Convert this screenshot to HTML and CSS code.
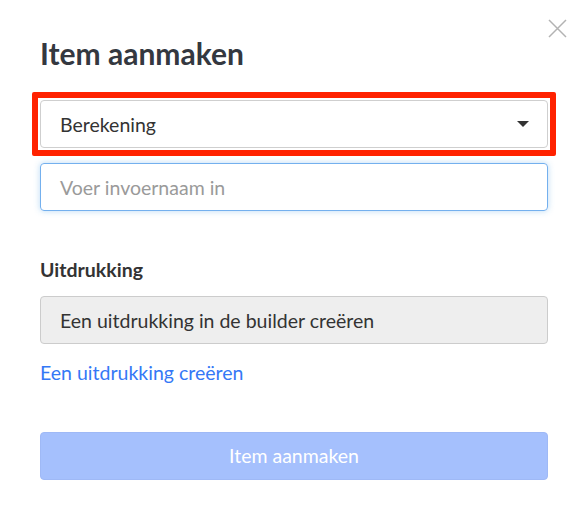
FILE: index.html
```html
<!DOCTYPE html>
<html lang="nl">
<head>
<meta charset="utf-8">
<title>Item aanmaken</title>
<link rel="stylesheet" href="styles.css">
</head>
<body>
<div class="modal">
  <button class="close" aria-label="Sluiten">
    <svg width="19" height="19" viewBox="0 0 19 19"><path d="M1 1L18 18M18 1L1 18" stroke="#b3b3b3" stroke-width="1.5" fill="none"/></svg>
  </button>
  <h1 class="title">Item aanmaken</h1>
  <div class="highlight">
    <div class="select">
      <span class="select-text">Berekening</span>
      <span class="caret"></span>
    </div>
  </div>
  <div class="input">Voer invoernaam in</div>
  <div class="label">Uitdrukking</div>
  <div class="builder">Een uitdrukking in de builder creëren</div>
  <a class="link" href="#">Een uitdrukking creëren</a>
  <div class="submit">Item aanmaken</div>
</div>
</body>
</html>
```
FILE: styles.css
```css
* { box-sizing: border-box; }
html, body { margin: 0; padding: 0; background: #fff; }
body { font-family: Lato, "Open Sans", sans-serif; color: #333; }
.modal {
  position: relative;
  width: 586px;
  height: 518px;
  padding: 35px 38px 0 40px;
  display: flex;
  flex-direction: column;
}
.close {
  position: absolute;
  left: 548px;
  top: 19px;
  width: 19px;
  height: 19px;
  padding: 0;
  border: 0;
  background: none;
}
.close svg { display: block; }
.title {
  margin: 0;
  font-size: 30px;
  line-height: 36px;
  font-weight: 700;
  color: #343840;
}
.highlight {
  margin: 21px -8px 0;
  border: 6px solid #ff2200;
  border-radius: 2px;
  padding: 2px;
}
.select {
  height: 48px;
  border: 1px solid #cfcfcf;
  border-radius: 4px;
  display: flex;
  align-items: center;
  justify-content: space-between;
  padding: 0 18px 0 19px;
  font-size: 19.5px;
  color: #333;
}
.caret {
  width: 0;
  height: 0;
  border-left: 6px solid transparent;
  border-right: 6px solid transparent;
  border-top: 6px solid #333;
}
.input {
  margin-top: 7px;
  height: 48px;
  border: 1px solid #74b0ee;
  border-radius: 4px;
  box-shadow: 0 0 6px rgba(102, 175, 233, 0.45);
  padding: 0 19px;
  display: flex;
  align-items: center;
  font-size: 19.5px;
  color: #9a9a9a;
}
.label {
  margin-top: 47px;
  font-size: 19.5px;
  line-height: 24px;
  font-weight: 700;
  color: #333;
}
.builder {
  margin-top: 14px;
  height: 48px;
  background: #eeeeee;
  border: 1px solid #cccccc;
  border-radius: 4px;
  padding: 0 19px;
  display: flex;
  align-items: center;
  font-size: 19.5px;
  color: #333;
}
.link {
  margin-top: 17px;
  font-size: 19.5px;
  line-height: 24px;
  color: #3478f6;
  text-decoration: none;
  align-self: flex-start;
}
.submit {
  margin-top: 47px;
  height: 48px;
  background: #a5c0fd;
  border: 1px solid #9fb9f6;
  border-radius: 4px;
  color: #fff;
  font-size: 19.5px;
  line-height: 46px;
  text-align: center;
}
```
